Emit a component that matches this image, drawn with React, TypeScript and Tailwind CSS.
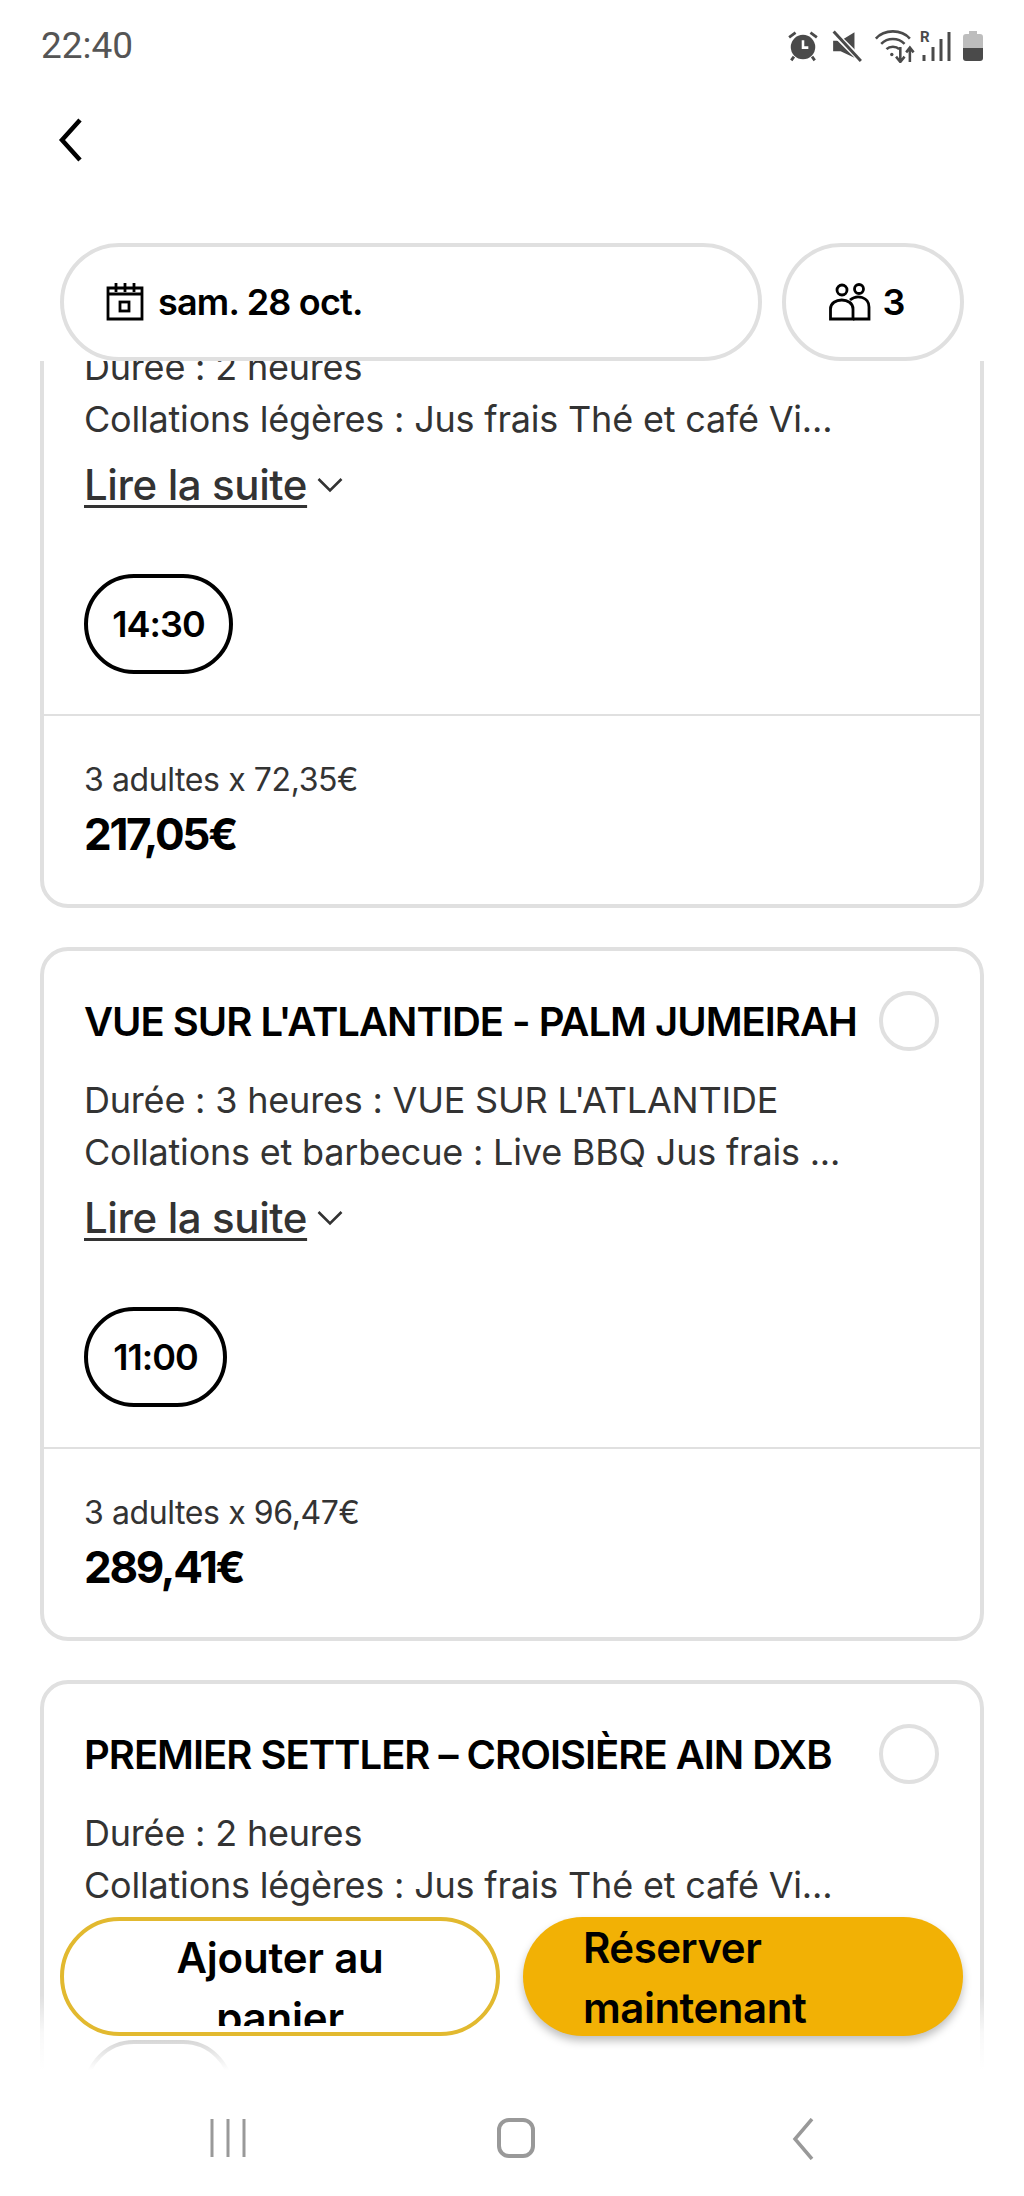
const font = "font-['Inter','Liberation_Sans',sans-serif]";

interface OfferProps {
  title: string;
  lines: string[];
  time: string;
  timeWidth: string;
  unit: string;
  price: string;
}

function Chevron() {
  return (
    <svg width="26" height="16" viewBox="0 0 26 16" fill="none" stroke="#333" strokeWidth="2.6">
      <path d="M1.5 2 L13 13.5 L24.5 2" />
    </svg>
  );
}

function Offer({ title, lines, time, timeWidth, unit, price }: OfferProps) {
  return (
    <div className="h-[694px] shrink-0 rounded-[28px] border-4 border-[#e0e0e0] bg-white">
      <div className="h-[498px] border-b-2 border-[#e0e0e0] pl-10 pr-[41px] pt-10">
        <div className="flex h-[60px] items-center justify-between">
          <h2 className="min-w-0 whitespace-nowrap pt-[2px] text-[40px] font-semibold leading-[60px] tracking-[-1px] text-black">{title}</h2>
          <div className="h-[60px] w-[60px] shrink-0 rounded-full border-4 border-[#e0e0e0]" />
        </div>
        <div className="mt-[23px] text-[36px] leading-[52px] tracking-[-0.2px] text-[#333]">
          {lines.map((line) => (
            <p key={line} className="whitespace-nowrap">{line}</p>
          ))}
        </div>
        <div className="mt-[12px] flex h-[56px] items-center gap-[10px]">
          <span className="text-[42px] font-medium leading-[56px] tracking-[-0.4px] text-[#333] underline decoration-[3px] underline-offset-[5px]">
            Lire la suite
          </span>
          <Chevron />
        </div>
        <div className={`mt-[61px] flex h-[100px] items-center justify-center rounded-full border-4 border-black text-[36px] font-semibold tracking-[-1px] text-black ${timeWidth}`}>
          {time}
        </div>
      </div>
      <div className="pl-10 pt-[42px]">
        <p className="text-[32px] leading-[44px] tracking-[-0.4px] text-[#333]">{unit}</p>
        <p className="mt-[4px] text-[44px] font-bold leading-[56px] tracking-[-2.3px] text-black">{price}</p>
      </div>
    </div>
  );
}

function StatusIcons() {
  return (
    <div className="flex items-center gap-[12px]">
      <svg width="34" height="32" viewBox="0 0 30 30">
        <circle cx="15" cy="16" r="11.5" fill="#4a4a4a" />
        <path d="M15 9.5 V16.5 H20" fill="none" stroke="#fff" strokeWidth="2.4" />
        <path d="M2 7 L8 2.5 M28 7 L22 2.5 M6.5 25 L4 28.5 M23.5 25 L26 28.5" stroke="#4a4a4a" strokeWidth="2.6" />
      </svg>
      <svg width="30" height="32" viewBox="0 0 28 30">
        <path d="M21 2 V26 L8 20 H1 V10 H8 Z" fill="#4a4a4a" />
        <path d="M1 2 L27 28" stroke="#fff" strokeWidth="5.500" />
        <path d="M1.500 1.500 L27 29" stroke="#4a4a4a" strokeWidth="2.800" />
      </svg>
      <svg width="42" height="34" viewBox="0 0 38 32" fill="none" stroke="#4a4a4a" strokeWidth="2.400">
        <path d="M1 9 C9 0 25 0 33 9" />
        <path d="M6 14 C12 8 22 8 28 14" />
        <path d="M11 19 C14 16 20 16 23 19" />
        <circle cx="16" cy="24" r="1.600" fill="#4a4a4a" stroke="none" />
        <path d="M24 17 V30 M20 26 L24 31 L28 26" />
        <path d="M33 31 V18 M29.500 22 L33 17.500 L36.500 22" />
      </svg>
      <svg width="32" height="32" viewBox="0 0 32 32" className="-ml-[8px]">
        <text x="0" y="12" fontSize="15" fontWeight="700" fill="#4a4a4a" fontFamily="Roboto, sans-serif">R</text>
        <path d="M4 31 V25 M13 31 V17 M21 31 V9 M29 31 V2" stroke="#4a4a4a" strokeWidth="3" />
      </svg>
      <svg width="20" height="32" viewBox="0 0 20 30" className="-ml-[1px]">
        <path d="M6 0 H14 V3 H17 Q20 3 20 6 V17 H0 V6 Q0 3 3 3 H6 Z" fill="#bdbdbd" />
        <path d="M0 17 H20 V27 Q20 30 17 30 H3 Q0 30 0 27 Z" fill="#4a4a4a" />
      </svg>
    </div>
  );
}

export default function App() {
  return (
    <div className={`relative flex h-[2196px] w-[1024px] flex-col overflow-hidden bg-white ${font}`}>
      <div className="flex h-[88px] shrink-0 items-center justify-between pl-[41px] pr-[41px] pt-1">
        <span className="font-['Roboto',sans-serif] text-[37px] text-[#555]">22:40</span>
        <StatusIcons />
      </div>

      <div className="flex h-[155px] shrink-0 items-start pl-[58px] pt-[30px]">
        <svg width="26" height="44" viewBox="0 0 26 44" fill="none" stroke="#000" strokeWidth="4.500">
          <path d="M22 2 L4 22 L22 42" />
        </svg>
      </div>

      <div className="z-10 flex h-[118px] shrink-0 gap-[20px] px-[60px]">
        <div className="flex w-[702px] items-center gap-[14px] rounded-full border-4 border-[#e0e0e0] bg-white pl-[42px]">
          <svg width="38" height="38" viewBox="0 0 38 38" fill="none" stroke="#000" strokeWidth="2.800">
            <path d="M2 5 H36 V36 H2 Z" />
            <path d="M10 0 V9 M19 0 V9 M28 0 V9 M2 11 H36" />
            <rect x="14" y="19" width="9" height="9" />
          </svg>
          <span className="text-[36px] font-semibold tracking-[-0.8px] text-black">sam. 28 oct.</span>
        </div>
        <div className="flex w-[182px] items-center justify-center gap-[12px] rounded-full border-4 border-[#e0e0e0] bg-white pr-[12px]">
          <svg width="42" height="38" viewBox="0 0 42 38" fill="none" stroke="#000" strokeWidth="2.800">
            <circle cx="13" cy="7" r="5" />
            <circle cx="30" cy="6" r="4.500" />
            <path d="M1.500 36 V26 C1.500 14 24 14 24 26 V36 Z" />
            <path d="M21 17 C28 11 40 14 40 24 V36 H24" />
          </svg>
          <span className="text-[36px] font-semibold text-black">3</span>
        </div>
      </div>

      <div className="relative min-h-0 flex-1 overflow-hidden px-10">
        <div className="-mt-[147px] flex flex-col gap-[39px]">
          <Offer
            title="PREMIER SETTLER – CROISIÈRE AIN DXB"
            lines={["Durée : 2 heures", "Collations légères : Jus frais Thé et café Vi..."]}
            time="14:30"
            timeWidth="w-[149px]"
            unit="3 adultes x 72,35€"
            price="217,05€"
          />
          <Offer
            title="VUE SUR L'ATLANTIDE - PALM JUMEIRAH"
            lines={["Durée : 3 heures : VUE SUR L'ATLANTIDE", "Collations et barbecue : Live BBQ Jus frais ..."]}
            time="11:00"
            timeWidth="w-[143px]"
            unit="3 adultes x 96,47€"
            price="289,41€"
          />
          <Offer
            title="PREMIER SETTLER – CROISIÈRE AIN DXB"
            lines={["Durée : 2 heures", "Collations légères : Jus frais Thé et café Vi..."]}
            time="14:30"
            timeWidth="w-[149px]"
            unit="3 adultes x 72,35€"
            price="217,05€"
          />
        </div>
      </div>

      <div className="absolute inset-x-0 top-[1995px] h-[75px] bg-gradient-to-b from-white/0 via-white/80 to-white" />

      <div className="absolute inset-x-0 top-[1917px] flex gap-[23px] px-[60px]">
        <div className="h-[119px] w-[440px] overflow-hidden rounded-full border-4 border-[#e2b92f] bg-white py-[4px] text-center text-[42px] font-semibold leading-[60px] tracking-[-0.2px] text-black">
          <div className="h-[101px] overflow-hidden pt-[3px]">
            Ajouter au
            <br />
            panier
          </div>
        </div>
        <div className="h-[119px] w-[440px] rounded-full bg-[#f2b105] pl-[60px] pt-[1px] text-[42px] font-semibold leading-[60px] tracking-[-0.5px] text-black shadow-[0_5px_8px_rgba(0,0,0,0.25)]">
          Réserver
          <br />
          maintenant
        </div>
      </div>

      <div className="flex h-[126px] shrink-0 items-start justify-between bg-white pl-[210px] pr-[210px] pt-[48px]">
        <svg width="36" height="40" viewBox="0 0 36 40" stroke="#999" strokeWidth="3">
          <path d="M2 1 V39 M18 1 V39 M34 1 V39" />
        </svg>
        <svg width="38" height="40" viewBox="0 0 38 40" fill="none" stroke="#999" strokeWidth="4" className="mr-[6px]">
          <rect x="2" y="2" width="34" height="36" rx="10" />
        </svg>
        <svg width="22" height="42" viewBox="0 0 22 42" fill="none" stroke="#999" strokeWidth="3.500">
          <path d="M20 1 L3 21 L20 41" />
        </svg>
      </div>
    </div>
  );
}
